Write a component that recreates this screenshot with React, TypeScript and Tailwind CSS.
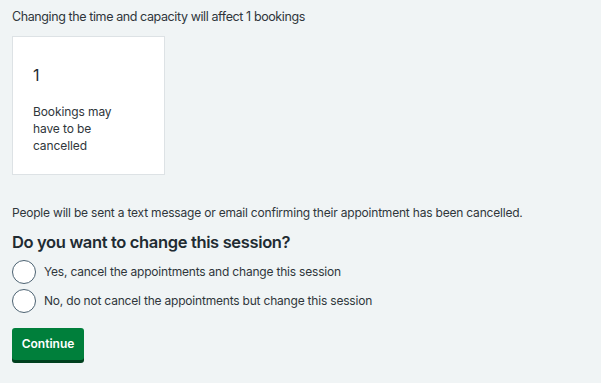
export default function App() {
  const options = [
    'Yes, cancel the appointments and change this session',
    'No, do not cancel the appointments but change this session',
  ]

  return (
    <div className="min-h-[383px] w-[601px] bg-[#f0f4f5] px-3 pt-[9px] text-[#2f363b] font-['Inter',sans-serif]">
      <p className="text-[12.5px] leading-4 tracking-[-0.4px]">Changing the time and capacity will affect 1 bookings</p>

      <div className="mt-[11px] flex h-[139px] w-[153px] flex-col border border-[#dde2e5] bg-white px-5 pt-[28px]">
        <span className="text-[16px] leading-5 text-[#212b32]">1</span>
        <span className="mt-[18px] w-[84px] text-[12px] leading-[17px] tracking-[-0.1px]">Bookings may have to be cancelled</span>
      </div>

      <p className="mt-[30px] text-[12px] leading-4 tracking-[-0.2px]">
        People will be sent a text message or email confirming their appointment has been cancelled.
      </p>

      <h2 className="mt-[11px] text-[16.5px] leading-5 font-semibold tracking-[-0.35px] text-[#212b32]">
        Do you want to change this session?
      </h2>

      <div className="mt-[8px] flex flex-col gap-[5px]">
        {options.map(label => (
          <label key={label} className="flex items-center gap-[8px]">
            <span className="block h-[24px] w-[24px] rounded-full border-[1.5px] border-[#4c6272] bg-white" />
            <span className="text-[12px] leading-4 tracking-[-0.2px]">{label}</span>
          </label>
        ))}
      </div>

      <button className="mt-[15px] h-[32px] w-[72px] rounded-[3px] bg-[#007f3b] text-[12px] font-semibold text-white shadow-[0_3px_0_#00401e]">
        Continue
      </button>
    </div>
  )
}
